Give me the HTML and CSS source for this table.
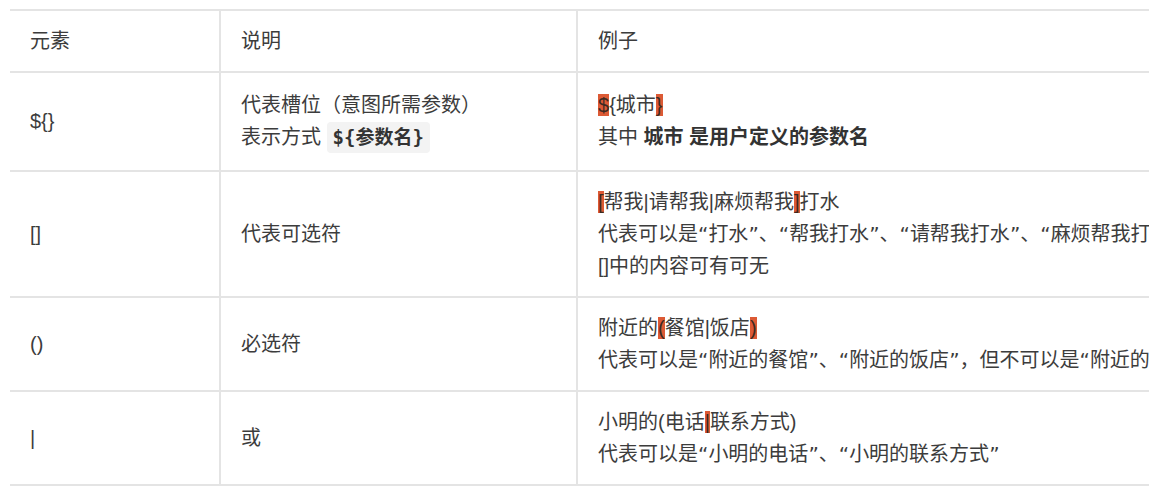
FILE: index.html
```html
<!DOCTYPE html>
<html lang="zh-CN">
<head>
<meta charset="utf-8">
<title>语法元素</title>
<link rel="stylesheet" href="styles.css">
</head>
<body>
<div class="clip">
  <table class="grid">
    <colgroup>
      <col class="c1">
      <col class="c2">
      <col class="c3">
    </colgroup>
    <thead>
      <tr>
        <th>元素</th>
        <th>说明</th>
        <th>例子</th>
      </tr>
    </thead>
    <tbody>
      <tr class="tall">
        <td>${}</td>
        <td>代表槽位（意图所需参数）<br>表示方式 <code class="code">${参数名}</code></td>
        <td><mark class="hl">$</mark>{城市<mark class="hl">}</mark><br>其中 <strong class="b">城市 是用户定义的参数名</strong></td>
      </tr>
      <tr>
        <td>[]</td>
        <td>代表可选符</td>
        <td><mark class="hl">[</mark>帮我|请帮我|麻烦帮我<mark class="hl">]</mark>打水<br>代表可以是<span class="q">“</span>打水<span class="q">”</span>、<span class="q">“</span>帮我打水<span class="q">”</span>、<span class="q">“</span>请帮我打水<span class="q">”</span>、<span class="q">“</span>麻烦帮我打水<span class="q">”</span><br>[]中的内容可有可无</td>
      </tr>
      <tr>
        <td>()</td>
        <td>必选符</td>
        <td>附近的<mark class="hl">(</mark>餐馆|饭店<mark class="hl">)</mark><br>代表可以是<span class="q">“</span>附近的餐馆<span class="q">”</span>、<span class="q">“</span>附近的饭店<span class="q">”</span>，但不可以是<span class="q">“</span>附近的<span class="q">”</span></td>
      </tr>
      <tr>
        <td>|</td>
        <td>或</td>
        <td>小明的(电话<mark class="hl">|</mark>联系方式)<br>代表可以是<span class="q">“</span>小明的电话<span class="q">”</span>、<span class="q">“</span>小明的联系方式<span class="q">”</span></td>
      </tr>
    </tbody>
  </table>
</div>
</body>
</html>
```

FILE: styles.css
```css
html, body {
  margin: 0;
  padding: 0;
  background: #ffffff;
}

body {
  padding: 9px 11px 0 10px;
  font-family: "Liberation Sans", "Noto Sans CJK SC", sans-serif;
  font-size: 20px;
  color: #3c3c3c;
}

.clip {
  width: 1139px;
  overflow: hidden;
}

.grid {
  border-collapse: collapse;
  table-layout: fixed;
  width: 1400px;
}

.c1 { width: 210px; }
.c2 { width: 357px; }
.c3 { width: 833px; }

.grid th,
.grid td {
  text-align: left;
  font-weight: normal;
  vertical-align: middle;
  padding: 14px 20px;
  line-height: 32px;
  border-top: 2px solid #e4e4e4;
  border-bottom: 2px solid #e4e4e4;
  white-space: nowrap;
}

.grid th + th,
.grid td + td {
  border-left: 2px solid #e4e4e4;
}

.grid tr.tall td {
  padding-top: 16px;
  padding-bottom: 17px;
}

.q {
  font-family: "DejaVu Sans", sans-serif;
}

.hl {
  background: #dc5a35;
  color: #3c2a22;
}

.code {
  font-family: "DejaVu Sans Mono", "Noto Sans CJK SC", monospace;
  font-size: 19px;
  font-weight: bold;
  color: #333333;
  background: #f3f3f3;
  border-radius: 4px;
  padding: 4px 6px 5px;
}

.b {
  font-weight: bold;
  color: #333333;
}
```
